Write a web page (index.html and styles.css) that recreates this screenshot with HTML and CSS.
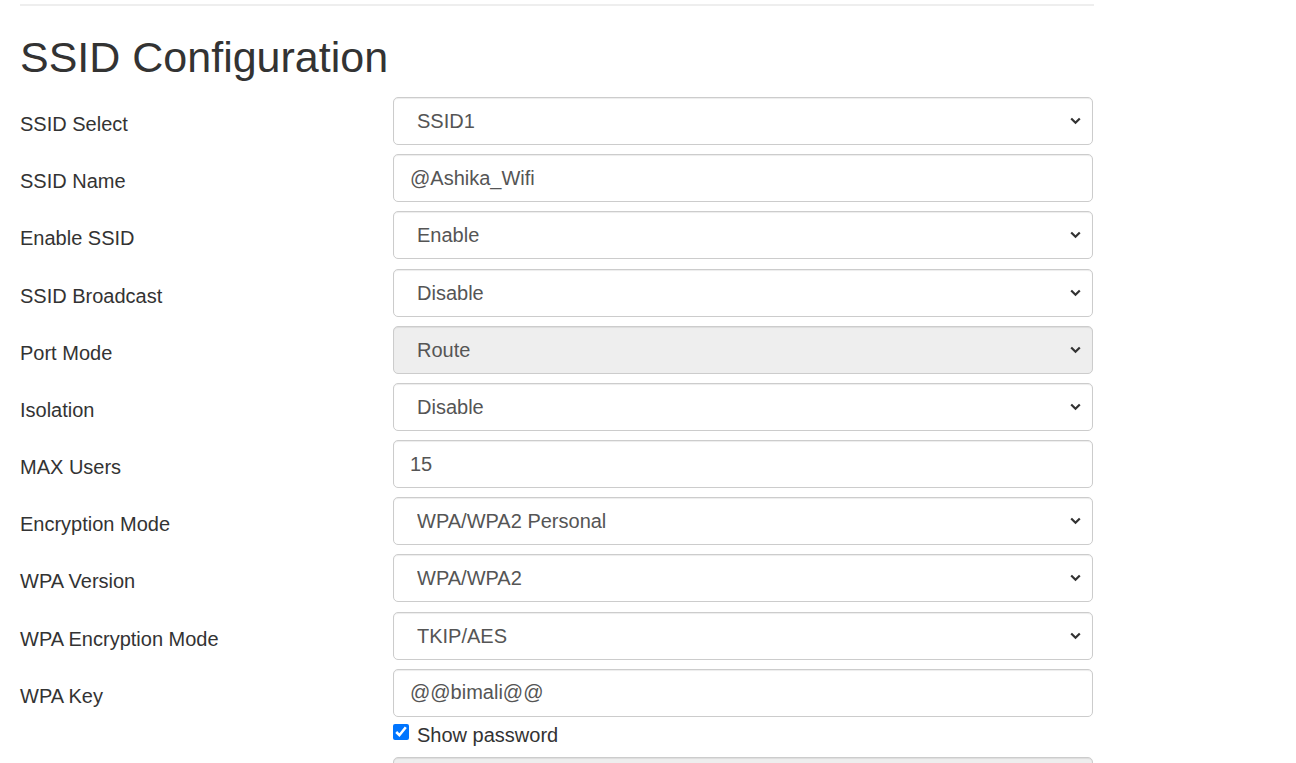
FILE: index.html
```html
<!DOCTYPE html>
<html>
<head>
<meta charset="utf-8">
<title>SSID Configuration</title>
<link rel="stylesheet" href="styles.css">
</head>
<body>
<div class="page">
  <hr class="rule">
  <h1 class="title">SSID Configuration</h1>
  <form class="form">
    <div class="group">
      <label class="label">SSID Select</label>
      <div class="sel"><select class="field"><option>SSID1</option><option>SSID2</option></select><svg class="chev" width="11" height="8" viewBox="0 0 11 8"><path d="M1.2 1.5 L5.5 5.8 L9.8 1.5" fill="none" stroke="#333" stroke-width="2.2"/></svg></div>
    </div>
    <div class="group">
      <label class="label">SSID Name</label>
      <input class="field" type="text" value="@Ashika_Wifi">
    </div>
    <div class="group">
      <label class="label">Enable SSID</label>
      <div class="sel"><select class="field"><option>Enable</option><option>Disable</option></select><svg class="chev" width="11" height="8" viewBox="0 0 11 8"><path d="M1.2 1.5 L5.5 5.8 L9.8 1.5" fill="none" stroke="#333" stroke-width="2.2"/></svg></div>
    </div>
    <div class="group">
      <label class="label">SSID Broadcast</label>
      <div class="sel"><select class="field"><option>Disable</option><option>Enable</option></select><svg class="chev" width="11" height="8" viewBox="0 0 11 8"><path d="M1.2 1.5 L5.5 5.8 L9.8 1.5" fill="none" stroke="#333" stroke-width="2.2"/></svg></div>
    </div>
    <div class="group">
      <label class="label">Port Mode</label>
      <div class="sel"><select class="field" disabled><option>Route</option></select><svg class="chev" width="11" height="8" viewBox="0 0 11 8"><path d="M1.2 1.5 L5.5 5.8 L9.8 1.5" fill="none" stroke="#333" stroke-width="2.2"/></svg></div>
    </div>
    <div class="group">
      <label class="label">Isolation</label>
      <div class="sel"><select class="field"><option>Disable</option><option>Enable</option></select><svg class="chev" width="11" height="8" viewBox="0 0 11 8"><path d="M1.2 1.5 L5.5 5.8 L9.8 1.5" fill="none" stroke="#333" stroke-width="2.2"/></svg></div>
    </div>
    <div class="group">
      <label class="label">MAX Users</label>
      <input class="field" type="text" value="15">
    </div>
    <div class="group">
      <label class="label">Encryption Mode</label>
      <div class="sel"><select class="field"><option>WPA/WPA2 Personal</option></select><svg class="chev" width="11" height="8" viewBox="0 0 11 8"><path d="M1.2 1.5 L5.5 5.8 L9.8 1.5" fill="none" stroke="#333" stroke-width="2.2"/></svg></div>
    </div>
    <div class="group">
      <label class="label">WPA Version</label>
      <div class="sel"><select class="field"><option>WPA/WPA2</option></select><svg class="chev" width="11" height="8" viewBox="0 0 11 8"><path d="M1.2 1.5 L5.5 5.8 L9.8 1.5" fill="none" stroke="#333" stroke-width="2.2"/></svg></div>
    </div>
    <div class="group">
      <label class="label">WPA Encryption Mode</label>
      <div class="sel"><select class="field"><option>TKIP/AES</option></select><svg class="chev" width="11" height="8" viewBox="0 0 11 8"><path d="M1.2 1.5 L5.5 5.8 L9.8 1.5" fill="none" stroke="#333" stroke-width="2.2"/></svg></div>
    </div>
    <div class="group group-key">
      <label class="label">WPA Key</label>
      <div class="col">
        <input class="field" type="text" value="@@bimali@@">
        <label class="check"><input class="box" type="checkbox" checked><span>Show password</span></label>
      </div>
    </div>
    <div class="group">
      <label class="label"></label>
      <input class="field" type="text" disabled value="">
    </div>
  </form>
</div>
</body>
</html>
```

FILE: styles.css
```css
html, body {
  margin: 0;
  padding: 0;
  background: #fff;
}
body {
  font-family: "Liberation Sans", Arial, sans-serif;
  color: #333;
  font-size: 20px;
}
.page {
  width: 1074px;
  margin-left: 20px;
  padding-top: 4px;
}
.rule {
  margin: 0;
  border: 0;
  border-top: 2px solid #eee;
  height: 0;
}
.title {
  margin: 28.4px 0 15.3px;
  font-size: 43px;
  font-weight: 500;
  line-height: 1.1;
  color: #333;
}
.form {
  margin: 0;
}
.group {
  display: flex;
  align-items: flex-start;
  margin-bottom: 9.2px;
}
.group-key {
  margin-bottom: 8px;
}
.label {
  width: 373px;
  flex: 0 0 373px;
  padding-top: 13px;
  line-height: 28px;
  font-size: 20px;
  color: #333;
}
.col {
  display: flex;
  flex-direction: column;
  width: 700px;
}
.sel {
  position: relative;
  width: 700px;
  height: 48px;
}
.sel .field {
  display: block;
}
.chev {
  display: block;
  position: absolute;
  right: 12px;
  top: 20px;
  pointer-events: none;
}
.field {
  box-sizing: border-box;
  width: 700px;
  height: 48px;
  margin: 0;
  padding: 0 16px;
  font-family: "Liberation Sans", Arial, sans-serif;
  font-size: 20px;
  color: #555;
  background-color: #fff;
  border: 1px solid #ccc;
  border-radius: 5px;
  box-shadow: inset 0 1px 1px rgba(0, 0, 0, 0.075);
  outline: none;
}
select.field {
  -webkit-appearance: none;
  appearance: none;
  padding-left: 23px;
  padding-right: 30px;
}
.field:disabled {
  background-color: #eee;
  color: #555;
  opacity: 1;
}
.check {
  display: flex;
  align-items: flex-start;
  margin-top: 4.4px;
  line-height: 28px;
  font-size: 20px;
  color: #333;
}
.box {
  width: 16px;
  height: 16px;
  margin: 2.5px 8px 0 0;
  accent-color: #0075ff;
}
```
